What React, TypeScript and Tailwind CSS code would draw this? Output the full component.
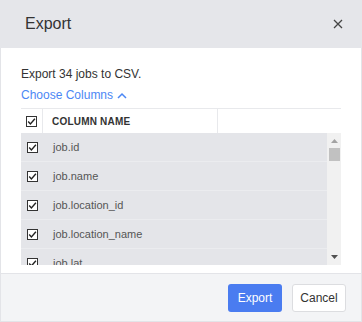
import { useState } from 'react';

const columns = ['job.id', 'job.name', 'job.location_id', 'job.location_name', 'job.lat', 'job.lng'];

const Check = ({ checked }: { checked: boolean }) => (
    <span className="flex h-[11px] w-[11px] items-center justify-center border border-[#333] bg-white">
        {checked && (
            <svg width="9" height="9" viewBox="0 0 9 9">
                <path d="M1.2 4.6 L3.4 6.9 L7.9 1.8" fill="none" stroke="#222" strokeWidth="1.4" />
            </svg>
        )}
    </span>
);

const ExportDialog = () => {
    const [selected, setSelected] = useState<string[]>(columns);

    const toggle = (c: string) =>
        setSelected((s) => (s.includes(c) ? s.filter((x) => x !== c) : [...s, c]));

    return (
        <div className="flex h-[322px] w-[362px] flex-col overflow-hidden bg-white text-[#333]" style={{ fontFamily: '"Liberation Sans", Arial, sans-serif' }}>
            <div className="flex h-[48px] shrink-0 items-center justify-between bg-[#e5e6ea] pr-[19px] pl-[25px]">
                <span className="text-[16px] text-[#333]">Export</span>
                <svg width="10" height="10" viewBox="0 0 10 10">
                    <path d="M1 1 L9 9 M9 1 L1 9" stroke="#444" strokeWidth="1.3" />
                </svg>
            </div>

            <div className="flex min-h-0 flex-1 flex-col border-x border-[#e3e4e8] px-[20px] pt-[18px] pb-[8px]">
                <p className="text-[12px] leading-[16px] text-[#333]">Export 34 jobs to CSV.</p>
                <button className="mt-[5px] flex items-center gap-[4px] text-[12px] leading-[16px] text-[#4b87f5]">
                    Choose Columns
                    <svg width="10" height="7" viewBox="0 0 10 7">
                        <path d="M1 6 L5 2 L9 6" fill="none" stroke="#4b87f5" strokeWidth="1.5" />
                    </svg>
                </button>

                <div className="mt-[5px] flex min-h-0 flex-1 flex-col overflow-hidden">
                    <div className="flex h-[25px] shrink-0 items-stretch border-t border-[#e8e9ec]">
                        <div className="flex w-[22px] items-center justify-center border-r border-[#e8e9ec]">
                            <Check checked={selected.length === columns.length} />
                        </div>
                        <div className="flex w-[175px] items-center border-r border-[#e8e9ec] pl-[9px] text-[10px] font-bold tracking-[0.2px] text-[#333]">
                            COLUMN NAME
                        </div>
                        <div className="flex-1" />
                    </div>

                    <div className="flex min-h-0 flex-1">
                        <div className="min-h-0 flex-1 overflow-hidden bg-[#e4e5e9]">
                            {columns.map((c) => (
                                <div
                                    key={c}
                                    onClick={() => toggle(c)}
                                    className="flex h-[29px] items-center border-b border-[#ebecef]"
                                >
                                    <div className="flex w-[22px] justify-center">
                                        <Check checked={selected.includes(c)} />
                                    </div>
                                    <span className="pl-[10px] text-[11px] text-[#555]">{c}</span>
                                </div>
                            ))}
                        </div>
                        <div className="flex w-[14px] flex-col items-center bg-[#f1f1f1]">
                            <svg className="mt-[6px]" width="7" height="4" viewBox="0 0 7 4">
                                <path d="M0 4 L3.5 0 L7 4 Z" fill="#a3a3a3" />
                            </svg>
                            <div className="mt-[5px] h-[13px] w-[11px] bg-[#c1c1c1]" />
                            <div className="flex-1" />
                            <svg className="mb-[6px]" width="7" height="4" viewBox="0 0 7 4">
                                <path d="M0 0 L7 0 L3.5 4 Z" fill="#505050" />
                            </svg>
                        </div>
                    </div>
                </div>
            </div>

            <div className="flex h-[49px] shrink-0 items-center justify-end gap-[10px] border border-[#e3e4e8] bg-[#f3f4f6] pr-[15px]">
                <button className="h-[28px] w-[54px] rounded-[3px] bg-[#4a7cf0] text-[12px] text-white">Export</button>
                <button className="h-[28px] w-[54px] rounded-[3px] border border-[#dcdde0] bg-white text-[12px] text-[#333]">
                    Cancel
                </button>
            </div>
        </div>
    );
};

export default function App() {
    return <ExportDialog />;
}
